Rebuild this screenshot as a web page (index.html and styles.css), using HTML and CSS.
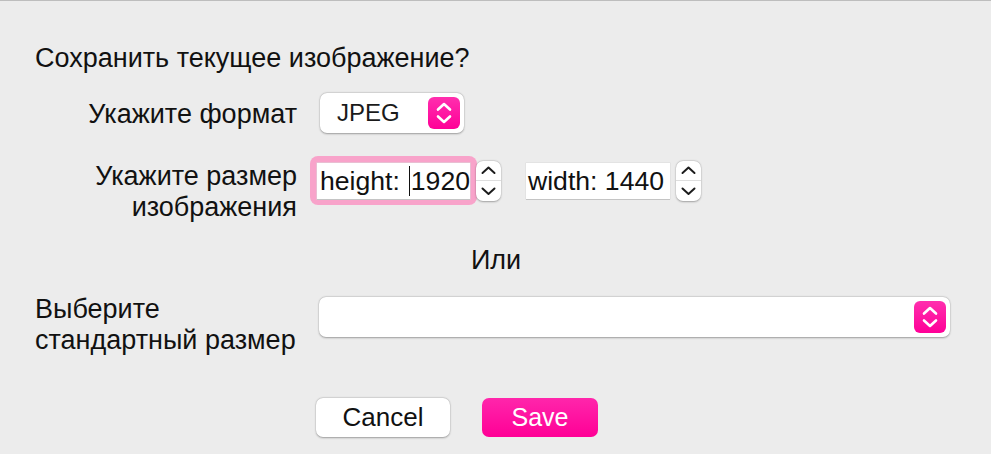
FILE: index.html
```html
<!DOCTYPE html>
<html lang="ru">
<head>
<meta charset="utf-8">
<title>Сохранить изображение</title>
<link rel="stylesheet" href="styles.css">
</head>
<body>
<div class="dialog">
  <p class="title">Сохранить текущее изображение?</p>

  <div class="row row-format">
    <label class="lbl lbl-right">Укажите формат</label>
    <div class="select select-small">
      <span class="select-value">JPEG</span>
      <span class="pink-arrows">
        <svg width="32" height="32" viewBox="0 0 32 32"><path d="M10 12.5 L16 7 L22 12.5 M10 19.5 L16 25 L22 19.5" stroke="#fff" stroke-width="2.6" fill="none" stroke-linecap="round" stroke-linejoin="round"/></svg>
      </span>
    </div>
  </div>

  <div class="row row-size">
    <label class="lbl lbl-right lbl-top">Укажите размер<br>изображения</label>
    <div class="sizes">
      <span class="ring"><span class="field field-height">height: <span class="caret"></span>1920</span></span>
      <span class="stepper">
        <svg width="25" height="40" viewBox="0 0 25 40"><path d="M6.5 12 L12.5 6.5 L18.5 12 M6.5 27.5 L12.5 33 L18.5 27.5" stroke="#1c1c1c" stroke-width="2" fill="none" stroke-linecap="round" stroke-linejoin="round"/><line x1="0" y1="19.5" x2="25" y2="19.5" stroke="#dedede" stroke-width="1"/></svg>
      </span>
      <span class="field field-width">width: 1440</span>
      <span class="stepper">
        <svg width="25" height="40" viewBox="0 0 25 40"><path d="M6.5 12 L12.5 6.5 L18.5 12 M6.5 27.5 L12.5 33 L18.5 27.5" stroke="#1c1c1c" stroke-width="2" fill="none" stroke-linecap="round" stroke-linejoin="round"/><line x1="0" y1="19.5" x2="25" y2="19.5" stroke="#dedede" stroke-width="1"/></svg>
      </span>
    </div>
  </div>

  <div class="or">Или</div>

  <div class="row row-std">
    <label class="lbl lbl-left lbl-top">Выберите<br>стандартный размер</label>
    <div class="select select-wide">
      <span class="select-value"></span>
      <span class="pink-arrows">
        <svg width="32" height="32" viewBox="0 0 32 32"><path d="M10 12.5 L16 7 L22 12.5 M10 19.5 L16 25 L22 19.5" stroke="#fff" stroke-width="2.6" fill="none" stroke-linecap="round" stroke-linejoin="round"/></svg>
      </span>
    </div>
  </div>

  <div class="row row-buttons">
    <span></span>
    <div class="buttons">
      <button class="btn btn-cancel">Cancel</button>
      <button class="btn btn-save">Save</button>
    </div>
  </div>
</div>
</body>
</html>
```

FILE: styles.css
```css
html, body {
  margin: 0;
  padding: 0;
  background: #ececec;
}

body {
  font-family: "Liberation Sans", Arial, sans-serif;
  font-size: 27px;
  color: #111;
}

.dialog {
  border-top: 1px solid #bdbdbd;
  width: 991px;
  height: 453px;
  box-sizing: border-box;
  padding: 42px 41px 0 35px;
}

.title {
  margin: 0;
  line-height: 30px;
}

.row {
  display: grid;
  grid-template-columns: 262px 1fr;
  column-gap: 23px;
}

.lbl {
  line-height: 31px;
}

.lbl-right {
  text-align: right;
}

.lbl-left {
  text-align: left;
}

.row-format {
  margin-top: 20px;
  align-items: center;
}

.row-format .lbl {
  padding-top: 2px;
}

.select {
  background: #fff;
  border-radius: 7px;
  box-shadow: 0 0.5px 2px rgba(0, 0, 0, 0.32), 0 0 0 0.5px rgba(0, 0, 0, 0.06);
  height: 40px;
  box-sizing: border-box;
  display: flex;
  align-items: center;
  justify-content: space-between;
  padding: 0 4px 0 17px;
}

.select-small {
  width: 144px;
}

.select-value {
  font-size: 24px;
  color: #1a1a1a;
}

.select-wide {
  width: 631px;
  margin-left: -1px;
  margin-top: 3px;
}

.pink-arrows {
  width: 32px;
  height: 32px;
  border-radius: 6px;
  background: linear-gradient(#ff2fae, #ff0097);
  display: flex;
}

.row-size {
  margin-top: 28px;
  align-items: start;
}

.sizes {
  display: flex;
  align-items: center;
  margin-left: -3px;
  height: 40px;
}

.ring {
  display: flex;
  padding: 7px 7px 6px 7px;
  margin: -7px -7px -6px -7px;
  background: #f8a3ca;
  border-radius: 8px;
}

.field {
  display: flex;
  align-items: center;
  height: 36px;
  box-sizing: border-box;
  background: #fff;
  box-shadow: 0 1px 0 #c4c4c4, 0 0 0 0.5px #dadada;
  line-height: 36px;
  font-size: 26.6px;
  white-space: pre;
  color: #111;
}

.field-height {
  width: 153px;
  padding-left: 3px;
}

.field-width {
  width: 144px;
  padding-left: 2px;
  margin-left: 25px;
}

.caret {
  display: inline-block;
  width: 1.5px;
  height: 30px;
  background: #111;
  margin-left: 2px;
  margin-right: 1px;
}

.stepper {
  width: 25px;
  height: 40px;
  margin-left: 6px;
  background: #fff;
  border-radius: 7px;
  box-shadow: 0 0.5px 2px rgba(0, 0, 0, 0.3), 0 0 0 0.5px rgba(0, 0, 0, 0.06);
  display: flex;
  z-index: 1;
}

.or {
  margin-top: 22px;
  line-height: 30px;
  text-align: center;
  padding-left: 7px;
}

.row-std {
  margin-top: 19px;
  align-items: start;
}

.row-buttons {
  margin-top: 42px;
}

.buttons {
  display: flex;
  gap: 32px;
  margin-left: -4px;
}

.btn {
  font-family: "Liberation Sans", Arial, sans-serif;
  font-size: 26px;
  height: 39px;
  border: none;
  border-radius: 7px;
  padding: 0;
  display: flex;
  align-items: center;
  justify-content: center;
}

.btn-cancel {
  width: 134px;
  background: #fff;
  color: #111;
  box-shadow: 0 0.5px 2px rgba(0, 0, 0, 0.32), 0 0 0 0.5px rgba(0, 0, 0, 0.06);
}

.btn-save {
  width: 116px;
  background: linear-gradient(#ff26ab, #ff0096);
  color: #fff;
  font-size: 25px;
}
```
